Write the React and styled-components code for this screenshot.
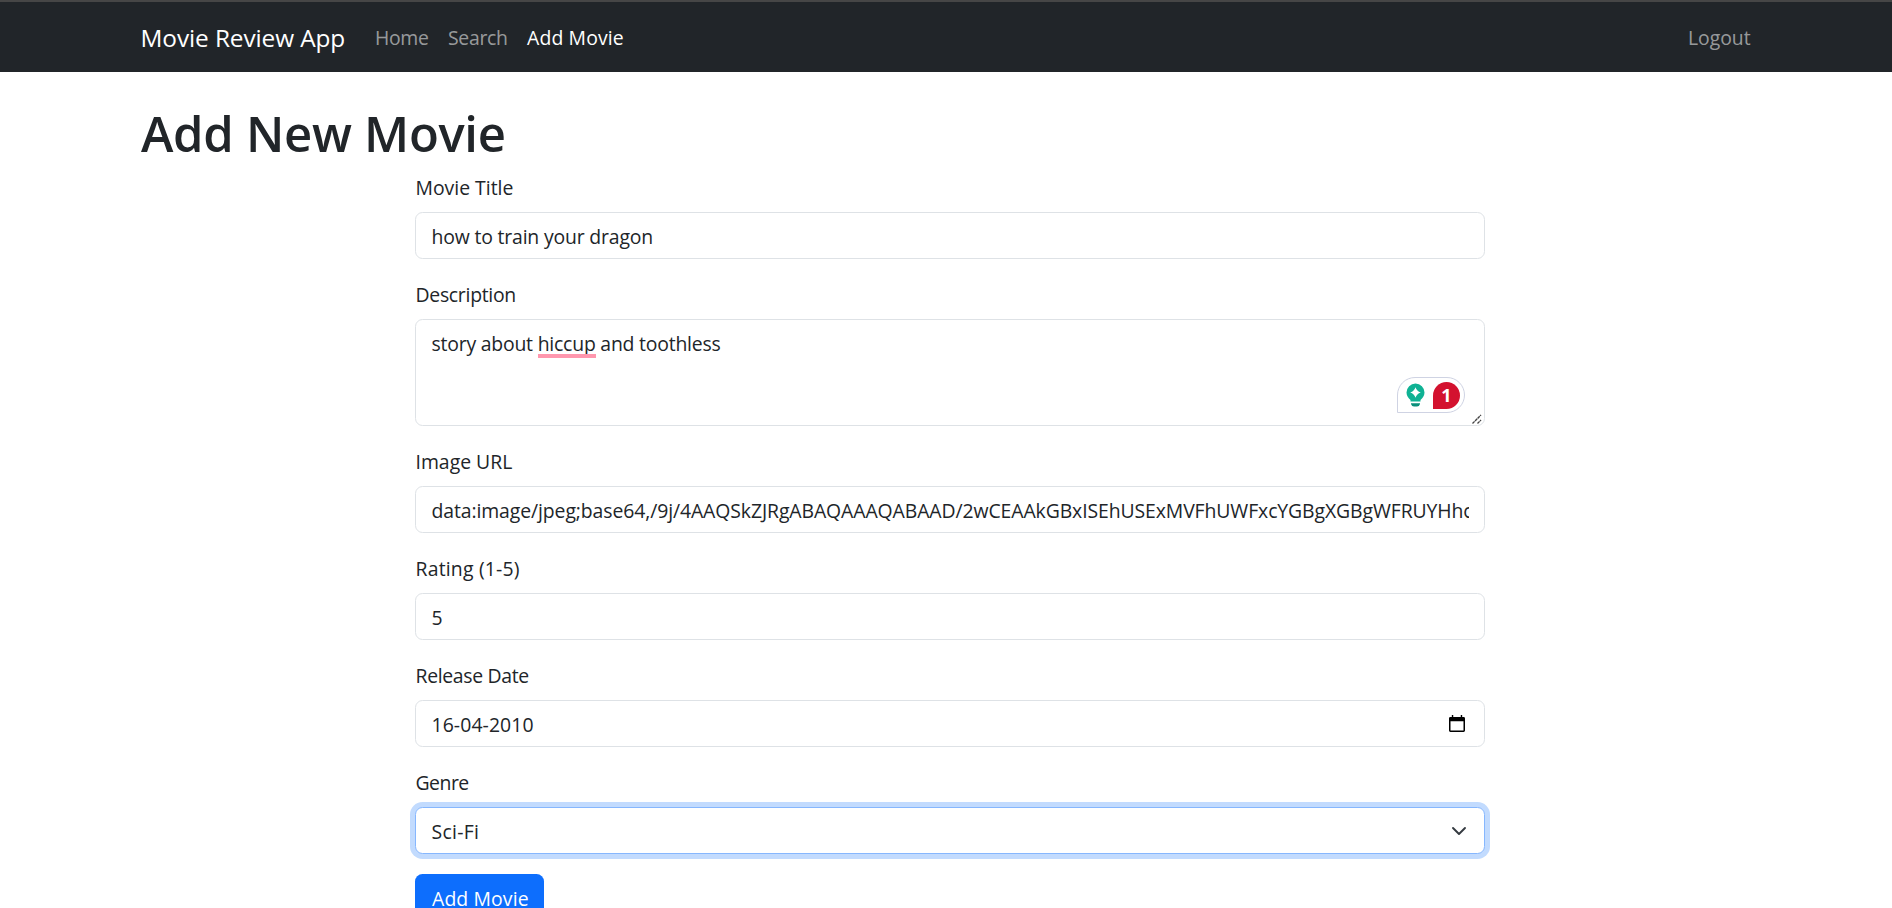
import React from "react";
import styled, { createGlobalStyle } from "styled-components";

const GlobalStyle = createGlobalStyle`
  * { box-sizing: border-box; }
  html, body { margin: 0; padding: 0; background: #fff; }
  body {
    font-family: "Segoe UI", "Open Sans", "Noto Sans", sans-serif;
    font-size: 19.4px;
    line-height: 31px;
    color: #212529;
  }
`;

const Page = styled.div`
  height: 908px;
  overflow: hidden;
`;

const Navbar = styled.nav`
  height: 72px;
  border-top: 2px solid #464646;
  background: #212529;
`;

const Container = styled.div`
  width: 1620px;
  margin-left: 140px;
`;

const NavContent = styled(Container)`
  height: 100%;
  display: flex;
  align-items: center;
`;

const Text = styled.span`
  letter-spacing: ${(p) => p.$track || 0}px;
  white-space: pre;
`;

const Brand = styled(Text)`
  width: 229px;
  padding-top: 1px;
  padding-left: 0.5px;
  color: #fff;
  font-size: 24.4px;
  line-height: 38px;
`;

const NavLink = styled(Text)`
  height: 30px;
  width: ${(p) => p.$width}px;
  padding-left: ${(p) => p.$pad || 6}px;
  color: ${(p) => (p.$active ? "#fff" : "rgba(255, 255, 255, 0.55)")};
  margin-left: ${(p) => (p.$end ? "auto" : "0")};
`;

const Heading = styled.h1`
  height: 60px;
  margin: 30px 0 10px;
  padding-left: 1px;
  font-size: 49px;
  font-weight: 600;
  line-height: 63px;
  letter-spacing: -0.3px;
`;

const Form = styled.form`
  width: 1070px;
  margin: 0 auto;
`;

const Field = styled.div`
  margin-bottom: 20px;
`;

const Label = styled(Text)`
  display: block;
  height: 30px;
  margin-bottom: 10px;
  padding-left: 0.5px;
`;

const Control = styled.div`
  position: relative;
  display: flex;
  align-items: flex-start;
  justify-content: space-between;
  height: ${(p) => p.$height || 47}px;
  padding: 7.5px 15px;
  border: 1px solid ${(p) => (p.$focused ? "#86b7fe" : "#dee2e6")};
  border-radius: 7.5px;
  background: #fff;
  box-shadow: ${(p) => (p.$focused ? "0 0 0 5px rgba(13, 110, 253, 0.25)" : "none")};
`;

const Value = styled(Text)`
  overflow: hidden;
  padding-left: 0.5px;
`;

const Misspelled = styled.span`
  position: relative;
  letter-spacing: -0.2px;
  &::after {
    content: "";
    position: absolute;
    left: 0;
    right: 0;
    top: 24px;
    height: 4px;
    background: #ff97ae;
  }
`;

const AssistantBadge = styled.div`
  position: absolute;
  right: 19px;
  bottom: 12px;
  display: flex;
  align-items: center;
  width: 68px;
  height: 36px;
  padding-left: 8px;
  border: 1px solid #cfd3e3;
  border-radius: 18px 18px 18px 0;
  background: #fff;
`;

const ErrorCount = styled.span`
  width: 27px;
  height: 27px;
  margin-left: 8px;
  border-radius: 14px 14px 14px 0;
  background: #d3122f;
  color: #fff;
  font-family: "Open Sans", sans-serif;
  font-size: 18px;
  font-weight: 700;
  line-height: 26px;
  text-align: center;
`;

const ResizeGrip = styled.svg`
  position: absolute;
  right: 2px;
  bottom: 1px;
`;

const CalendarIcon = styled.svg`
  margin: 6px 4px 0 0;
`;

const Chevron = styled.svg`
  margin: 7px 2px 0 0;
`;

const SubmitButton = styled.button`
  display: block;
  width: 129px;
  height: 47px;
  padding: 2px 0 0 17px;
  border: 0;
  border-radius: 7.5px;
  background: #0d6efd;
  color: #fff;
  font: inherit;
  line-height: 31px;
  text-align: left;
`;

const IMAGE_URL =
  "data:image/jpeg;base64,/9j/4AAQSkZJRgABAQAAAQABAAD/2wCEAAkGBxISEhUSExMVFhUWFxcYGBgXGBgWFRUYHhc";

function BulbIcon() {
  return (
    <svg width="19" height="24" viewBox="0 0 19 24">
      <path
        d="M9.5 0.5a9 9 0 0 0-9 9c0 3.4 1.9 5.6 4 7.5v1.5h10V17c2.1-1.9 4-4.1 4-7.5a9 9 0 0 0-9-9z"
        fill="#0fb294"
      />
      <path d="M9.5 4.2q1.2 4.1 5.3 5.3q-4.1 1.2-5.3 5.3q-1.2-4.1-5.3-5.3q4.1-1.2 5.3-5.3z" fill="#fff" />
      <path d="M5 20.2h9v.8q-.8 2.5-3 2.5H8Q5.8 23.5 5 21z" fill="#0a8f7b" />
    </svg>
  );
}

export default function App() {
  return (
    <Page>
      <GlobalStyle />
      <Navbar>
        <NavContent>
          <Brand $track={-0.1}>Movie Review App</Brand>
          <NavLink $width={73} $track={-0.3}>Home</NavLink>
          <NavLink $width={78} $track={-0.3}>Search</NavLink>
          <NavLink $width={110} $pad={7} $track={0.14} $active>Add Movie</NavLink>
          <NavLink $width={78} $track={-0.034} $end>Logout</NavLink>
        </NavContent>
      </Navbar>
      <Container as="main">
        <Heading>Add New Movie</Heading>
        <Form>
          <Field>
            <Label>Movie Title</Label>
            <Control><Value $track={-0.17}>how to train your dragon</Value></Control>
          </Field>
          <Field>
            <Label $track={-0.28}>Description</Label>
            <Control $height={107}>
              <Value $track={-0.21}>
                story about <Misspelled>hiccup</Misspelled> and toothless
              </Value>
              <AssistantBadge>
                <BulbIcon />
                <ErrorCount>1</ErrorCount>
              </AssistantBadge>
              <ResizeGrip width="10" height="10" viewBox="0 0 10 10" stroke="#444" strokeWidth="1.4">
                <path d="M0.5 9.5L9 1M5.500 9.5L9 6" strokeDasharray="3 0.6" />
              </ResizeGrip>
            </Control>
          </Field>
          <Field>
            <Label>Image URL</Label>
            <Control><Value $track={-0.094}>{IMAGE_URL}</Value></Control>
          </Field>
          <Field>
            <Label $track={0.2}>Rating (1-5)</Label>
            <Control><Value>5</Value></Control>
          </Field>
          <Field>
            <Label $track={-0.32}>Release Date</Label>
            <Control>
              <Value $track={0.1}>16-04-2010</Value>
              <CalendarIcon width="16" height="18" viewBox="0 0 17 19">
                <path d="M3 0h1.5v2h8V0H14v2h1.5Q17 2 17 3.5v13Q17 18 15.5 18h-14Q0 18 0 16.5v-13Q0 2 1.5 2H3zM1.6 6.5v9.9h13.8V6.5z" fillRule="evenodd" fill="#000" />
              </CalendarIcon>
            </Control>
          </Field>
          <Field>
            <Label $track={-0.5}>Genre</Label>
            <Control $focused>
              <Value $track={0.3}>Sci-Fi</Value>
              <Chevron width="16" height="16" viewBox="0 0 16 16">
                <path d="m2 5 6 6 6-6" fill="none" stroke="#343a40" strokeWidth="1.9" strokeLinecap="round" strokeLinejoin="round" />
              </Chevron>
            </Control>
          </Field>
          <SubmitButton type="button"><Text $track={0.12}>Add Movie</Text></SubmitButton>
        </Form>
      </Container>
    </Page>
  );
}
